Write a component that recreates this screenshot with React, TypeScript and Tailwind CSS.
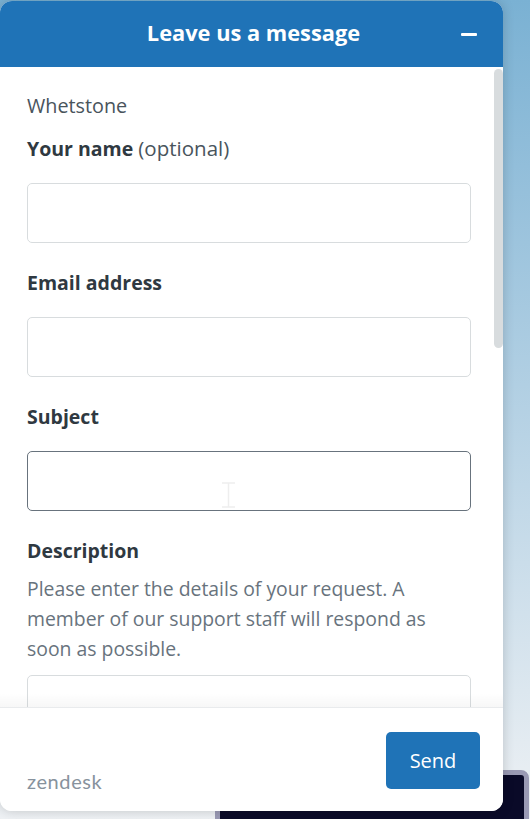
const font = { fontFamily: '"Open Sans", "Noto Sans", sans-serif' };

function Field({ focused = false }: { focused?: boolean }) {
  return (
    <div
      className={`h-[60px] w-[444px] rounded-[5px] border bg-white ${
        focused ? 'border-[#68737d]' : 'border-[#d8dcde]'
      }`}
    />
  );
}

export default function App() {
  return (
    <div
      className="relative h-[819px] w-[530px] overflow-hidden bg-gradient-to-b from-[#7ab1d3] to-[#eef1f4]"
      style={font}
    >
      {/* app button behind the widget */}
      <div className="absolute left-[215px] top-[770px] h-[60px] w-[314px] rounded-[8px] border-[5px] border-[#9a9ab4] bg-[#0a0a28]" />

      {/* widget */}
      <div className="absolute left-0 top-[1px] flex h-[810px] w-[503px] flex-col overflow-hidden rounded-[12px] bg-white shadow-[0_0_12px_rgba(0,0,0,0.18)]">
        <header className="relative flex h-[66px] shrink-0 items-center justify-center bg-[#1f73b7] pb-[2px] pl-[4px]">
          <h1 className="text-[21.8px] font-bold text-white">Leave us a message</h1>
          <span className="absolute left-[461px] top-[32px] h-[3px] w-[16px] rounded-[1px] bg-white" />
        </header>

        <div className="relative flex-1 overflow-hidden">
          <main className="pl-[27px] text-[#2f3941]">
            <p className="mt-[26px] text-[19.8px] leading-[26px] text-[#49545c]">Whetstone</p>
            <label className="mt-[17px] block h-[26px] text-[19.5px] leading-[26px]">
              <span className="font-bold">Your name</span>{' '}
              <span className="text-[20.5px] leading-none text-[#49545c]">(optional)</span>
            </label>
            <div className="mt-[21px]">
              <Field />
            </div>
            <label className="mt-[27px] block text-[19.5px] font-bold leading-[26px]">Email address</label>
            <div className="mt-[21px]">
              <Field />
            </div>
            <label className="mt-[27px] block text-[19.5px] font-bold leading-[26px]">Subject</label>
            <div className="relative mt-[21px]">
              <Field focused />
              {/* mouse cursor */}
              <svg className="absolute left-[194px] top-[31px]" width="15" height="26" viewBox="0 0 15 26" fill="none" stroke="#eeeeee" strokeWidth="1.5">
                <path d="M1 1h13M7.5 1v24M1 25h13" />
              </svg>
            </div>
            <label className="mt-[27px] block text-[19.5px] font-bold leading-[26px]">Description</label>
            <p className="mt-[10px] w-[444px] text-[19.4px] leading-[30px] text-[#68737d]">
              Please enter the details of your request. A member of our support staff will respond as soon as possible.
            </p>
            <div className="mt-[11px]">
              <Field />
            </div>
          </main>
          {/* scrollbar */}
          <div className="absolute left-[494px] top-[2px] h-[279px] w-[9px] rounded-full bg-[#d8dcde]" />
          <div className="absolute bottom-0 left-0 h-[14px] w-full bg-gradient-to-b from-transparent to-[#00000008]" />
        </div>

        <footer className="flex h-[104px] shrink-0 items-start justify-between border-t border-[#e9ebed] bg-white pl-[27px] pr-[23px]">
          <span className="mt-[61px] text-[20px] leading-[24px] tracking-[0.6px] text-[#87929d]" style={{ fontFamily: 'Lato, sans-serif' }}>
            zendesk
          </span>
          <button className="mt-[24px] h-[57px] w-[94px] rounded-[5px] bg-[#1f73b7] text-[20px] text-white">Send</button>
        </footer>
      </div>
    </div>
  );
}
